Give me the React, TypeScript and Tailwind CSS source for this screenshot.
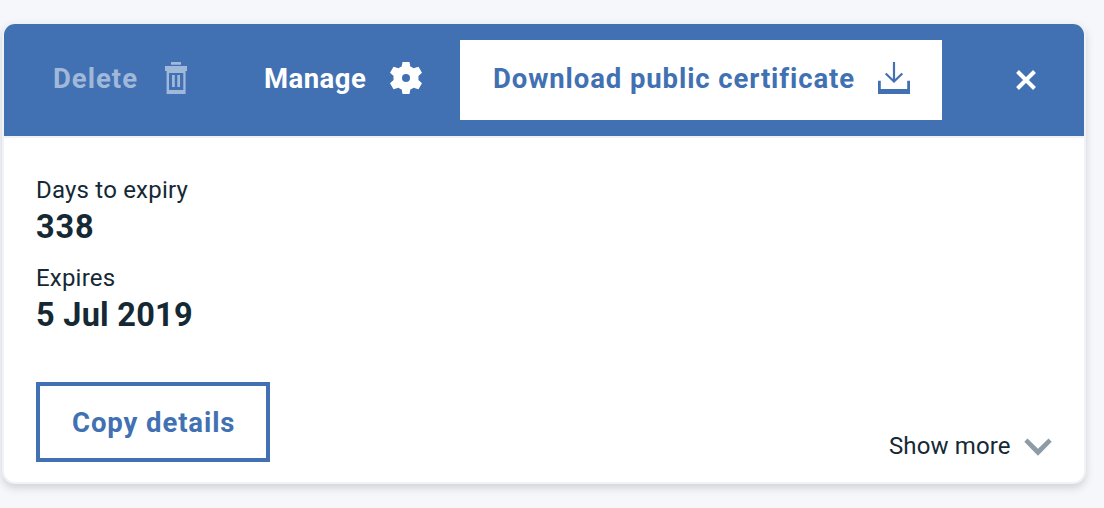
import React from 'react';

function TrashIcon() {
  return (
    <svg width="22" height="32" viewBox="0 0 22 32" fill="currentColor" aria-hidden="true">
      <path d="M6 0h10v2.800H6zM0 4h22v5H0z" />
      <path fillRule="evenodd" d="M1.600 9h19v23h-19zM4 11v17h14.300V11z" />
      <path d="M7 13h2.800v12H7zM12.300 13H15v12h-2.700z" />
    </svg>
  );
}

function GearIcon() {
  return (
    <svg width="32" height="32" viewBox="0 0 32 32" fill="currentColor" aria-hidden="true">
      <path
        fillRule="evenodd"
        d="M12.500 0h7l.8 4.400q1.800.700 3.200 1.900l5-1.600L32 10.800l-3.600 3.300q.3 1.900 0 3.800L32 21.200l-3.500 6.100-5-1.600q-1.400 1.200-3.200 1.900l-.8 4.400h-7l-.8-4.400q-1.800-.700-3.200-1.900l-5 1.600L0 21.200l3.600-3.300q-.3-1.900 0-3.800L0 10.800l3.500-6.100 5 1.600q1.400-1.200 3.200-1.900zM16 12a4 4 0 1 0 0 8 4 4 0 0 0 0-8z"
      />
    </svg>
  );
}

function DownloadIcon() {
  return (
    <svg width="32" height="32" viewBox="0 0 32 32" fill="none" aria-hidden="true">
      <path d="M16 0v19M7.700 11.500l8.300 8 8.300-8" stroke="currentColor" strokeWidth="2.200" />
      <path d="M0 18.700h2.800V27h26.400v-8.300H32V32H0z" fill="currentColor" />
    </svg>
  );
}

function Fact({ label, value, tracking }: { label: string; value: string; tracking: string }) {
  return (
    <div className="h-[88px]">
      <dt className="h-[33px] text-[24px] leading-[34px] tracking-[0.200px]">{label}</dt>
      <dd className={`h-[40px] text-[32.500px] leading-[43px] font-bold ${tracking}`}>{value}</dd>
    </div>
  );
}

export default function App() {
  return (
    <main className="h-[508px] overflow-hidden bg-[#f5f7fb] px-[2px] pt-[22px] font-[Roboto,sans-serif] whitespace-nowrap text-[#152935]">
      <section className="h-[462px] w-[1084px] overflow-hidden rounded-[13px] border-2 border-[#eff2f6] bg-white shadow-[0_4px_8px_rgba(0,0,0,0.15)]">
        <header className="box-content flex h-[112px] items-center border-b-2 border-[#eff2f6] bg-[#4171b2] bg-clip-padding text-[27.500px] font-bold text-white">
          <button disabled className="ml-[49px] flex h-20 items-center pb-1 text-[#a0b8d9]">
            <span className="w-[112px] pt-[2px] text-left leading-[36px] tracking-[1px]">Delete</span>
            <TrashIcon />
          </button>
          <button className="ml-[77px] flex h-20 items-center pb-1">
            <span className="w-[126px] pt-[2px] text-left leading-[36px] tracking-[0.450px]">Manage</span>
            <GearIcon />
          </button>
          <button className="ml-[38px] flex h-20 w-[482px] items-center bg-white pb-1 pl-[33px] text-[#4171b2]">
            <span className="w-[385px] pt-[2px] text-left leading-[36px] tracking-[0.900px]">Download public certificate</span>
            <DownloadIcon />
          </button>
          <button aria-label="Close" className="ml-[72px]">
            <svg width="24" height="24" viewBox="0 0 24 24" fill="none">
              <path d="M3.500 3.500l17 17M20.500 3.500l-17 17" stroke="currentColor" strokeWidth="4" />
            </svg>
          </button>
        </header>
        <dl className="h-[244px] pt-[35px] pl-[32px]">
          <Fact label="Days to expiry" value="338" tracking="tracking-[0.900px]" />
          <Fact label="Expires" value="5 Jul 2019" tracking="tracking-[0.250px]" />
        </dl>
        <footer className="flex h-20 items-start justify-between pr-[32px] pl-[32px]">
          <button className="h-20 w-[234px] border-4 border-[#4171b2] pt-[2px] pl-[32px] text-left text-[27.500px] font-bold tracking-[0.900px] text-[#4171b2]">
            Copy details
          </button>
          <button className="mt-[46px] flex h-[36px] items-center text-[24px]">
            <span className="w-[135px] text-left leading-[36px] tracking-[0.120px]">Show more</span>
            <svg className="mt-[1px] text-[#8c9ba5]" width="28" height="18" viewBox="0 0 28 18" fill="currentColor">
              <path d="M3.500.500L14 10.700 24.500.500l3.200 3.200L14 17.700.300 3.700z" />
            </svg>
          </button>
        </footer>
      </section>
    </main>
  );
}
